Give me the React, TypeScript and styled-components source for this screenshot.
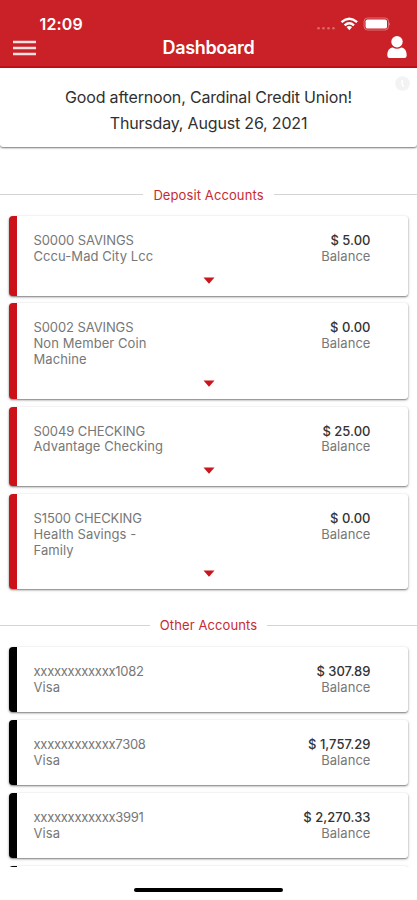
import React from "react";
import styled, { createGlobalStyle } from "styled-components";

const RED = "#ca2128";
const ACCENT = "#cb1219";

const GlobalStyle = createGlobalStyle`
  * { box-sizing: border-box; }
  body { margin: 0; background: #fff; font-family: Inter, "Liberation Sans", sans-serif; }
`;

const Screen = styled.div`
  height: 900px;
  display: flex;
  flex-direction: column;
  overflow: hidden;
  background: #fff;
`;

const Header = styled.header`
  height: 68px;
  flex: none;
  background: ${RED};
  border-bottom: 2px solid #be1016;
  color: #fff;
`;

const StatusBar = styled.div`
  height: 34px;
  padding: 14px 27px 0 39.5px;
  display: flex;
  justify-content: space-between;
`;

const Clock = styled.span`
  font-size: 16px;
  line-height: 20px;
  font-weight: 600;
  letter-spacing: 0.15px;
`;

const StatusIcons = styled.div`
  display: flex;
  height: 20px;
  align-items: center;
`;

const NavBar = styled.div`
  height: 32px;
  padding: 0 10px 0 13px;
  display: grid;
  grid-template-columns: 24px 1fr 20px;
  align-items: start;
`;

const MenuIcon = styled.svg`
  margin-top: 6px;
`;

const Title = styled.h1`
  margin: 2px 0 0;
  padding-right: 7px;
  text-align: center;
  font-size: 18px;
  line-height: 24px;
  font-weight: 600;
  letter-spacing: -0.35px;
`;

const UserIcon = styled.svg`
  margin-top: 1px;
`;

const Greeting = styled.section`
  position: relative;
  height: 79px;
  flex: none;
  padding-top: 16px;
  text-align: center;
  font-size: 16px;
  line-height: 26px;
  color: #303030;
  background: #fff;
  border-radius: 0 0 3px 3px;
  box-shadow: 0 1px 2px rgba(0, 0, 0, 0.55);
`;

const GreetingLine = styled.div`
  letter-spacing: -0.18px;
`;

const InfoDot = styled.svg`
  position: absolute;
  right: 7px;
  top: 8px;
`;

const AccountList = styled.main`
  padding: 37px 9px 0;
  height: 720px;
  flex: none;
  overflow: hidden;
`;

const SectionHeading = styled.h2<{ $top: number }>`
  margin: ${(p) => p.$top}px -9px 11px;
  height: 21px;
  display: flex;
  align-items: center;
  gap: 10px;
  color: #c82a31;
  font-size: 13px;
  font-weight: 400;
  letter-spacing: 0.1px;
  white-space: nowrap;

  &::before,
  &::after {
    content: "";
    flex: 1;
    height: 1px;
    background: #d4d4d4;
  }
`;

const Cards = styled.div<{ $gap: number }>`
  display: flex;
  flex-direction: column;
  gap: ${(p) => p.$gap}px;
`;

const Card = styled.article<{ $color: string; $height: number }>`
  height: ${(p) => p.$height}px;
  flex: none;
  display: flex;
  flex-direction: column;
  justify-content: space-between;
  padding: 17px 37.5px 12px 16.5px;
  border-left: 8px solid ${(p) => p.$color};
  border-radius: 4px 3px 3px 4px;
  background: #fff;
  box-shadow: 0 1px 2px rgba(0, 0, 0, 0.5), 0 1px 5px rgba(0, 0, 0, 0.07);
  font-size: 13px;
  line-height: 15.8px;
  color: #777;
`;

const CardRow = styled.div`
  display: flex;
  justify-content: space-between;
`;

const Name = styled.div<{ $spacing: number }>`
  letter-spacing: ${(p) => p.$spacing}px;
  white-space: nowrap;
`;

const Money = styled.div`
  text-align: right;
`;

const Amount = styled.div`
  color: #333;
  letter-spacing: 0.02px;
  font-weight: 500;
`;

const Caret = styled.svg`
  align-self: center;
  margin-left: 13px;
`;

const Footer = styled.footer`
  flex: 1;
  display: flex;
  justify-content: center;
  padding-top: 21px;
  background: #fff;
`;

const HomeIndicator = styled.div`
  width: 149px;
  height: 4px;
  border-radius: 2px;
  background: #000;
`;

type Account = { code: string; lines: string[]; amount: string };

const deposits: Account[] = [
  { code: "S0000 SAVINGS", lines: ["Cccu-Mad City Lcc"], amount: "5.00" },
  { code: "S0002 SAVINGS", lines: ["Non Member Coin", "Machine"], amount: "0.00" },
  { code: "S0049 CHECKING", lines: ["Advantage Checking"], amount: "25.00" },
  { code: "S1500 CHECKING", lines: ["Health Savings -", "Family"], amount: "0.00" },
];

const others: Account[] = [
  { code: "xxxxxxxxxxxx1082", lines: ["Visa"], amount: "307.89" },
  { code: "xxxxxxxxxxxx7308", lines: ["Visa"], amount: "1,757.29" },
  { code: "xxxxxxxxxxxx3991", lines: ["Visa"], amount: "2,270.33" },
  { code: "", lines: [], amount: "" },
];

function AccountCard({ account, deposit }: { account: Account; deposit?: boolean }) {
  const height = deposit ? 48 + 15.8 * (account.lines.length + 1) : 65;
  return (
    <Card $color={deposit ? ACCENT : "#000"} $height={height}>
      {account.code && (
        <CardRow>
          <div>
            <Name $spacing={deposit ? -0.1 : -0.28}>{account.code}</Name>
            {account.lines.map((line) => (
              <Name key={line} $spacing={0.07}>{line}</Name>
            ))}
          </div>
          <Money>
            <Amount>$ {account.amount}</Amount>
            <Name $spacing={0.05}>Balance</Name>
          </Money>
        </CardRow>
      )}
      {deposit && (
        <Caret width="12" height="7" viewBox="0 0 12 7">
          <path d="M0.5 0.5H11.5L6 6.7Z" fill="#c9151c" />
        </Caret>
      )}
    </Card>
  );
}

export default function App() {
  return (
    <Screen>
      <GlobalStyle />
      <Header>
        <StatusBar>
          <Clock>12:09</Clock>
          <StatusIcons>
            <svg width="74" height="20" viewBox="0 0 74 20">
              <g fill="#fff" fillOpacity="0.32">
                <circle cx="2.5" cy="14.2" r="1.3" />
                <circle cx="7.5" cy="14.2" r="1.3" />
                <circle cx="12.5" cy="14.2" r="1.3" />
                <circle cx="17.5" cy="14.2" r="1.3" />
              </g>
              <g fill="none" stroke="#fff" strokeWidth="2.4">
                <path d="M25.5 8.2Q33.3 1.5 41.1 8.2" />
                <path d="M28.6 11.4Q33.3 7.3 38 11.4" />
              </g>
              <path d="M30.5 13.1Q33.3 10.8 36.1 13.1L33.3 16.3Z" fill="#fff" />
              <rect x="48.1" y="4" width="24.4" height="12" rx="3.4" fill="none" stroke="#fff" strokeOpacity="0.35" />
              <rect x="49.6" y="5.4" width="21.4" height="9.2" rx="1.9" fill="#fff" />
              <path d="M73 8.2Q74.5 10 73 11.8Z" fill="#fff" fillOpacity="0.5" />
            </svg>
          </StatusIcons>
        </StatusBar>
        <NavBar>
          <MenuIcon width="23" height="16" viewBox="0 0 23 16">
            <path d="M0 2H23M0 8H23M0 14H23" stroke="#fff" strokeOpacity="0.86" strokeWidth="2.3" />
          </MenuIcon>
          <Title>Dashboard</Title>
          <UserIcon width="20" height="24" viewBox="0 0 20 24">
            <circle cx="10" cy="6.7" r="5.7" fill="#fff" />
            <path d="M0.3 20.5C0.3 15.5 2.3 13 5.7 12.5Q10 15 14.3 12.5C17.7 13 19.7 15.5 19.7 20.5Q19.7 23 17.3 23H2.7Q0.3 23 0.3 20.5Z" fill="#fff" />
          </UserIcon>
        </NavBar>
      </Header>
      <Greeting>
        <GreetingLine>Good afternoon, Cardinal Credit Union!</GreetingLine>
        <GreetingLine>Thursday, August 26, 2021</GreetingLine>
        <InfoDot width="15" height="15" viewBox="0 0 15 15">
          <circle cx="7.5" cy="7.5" r="7.3" fill="#f3f3f5" />
          <path d="M7.2 4V8.5L8.6 11" stroke="#fff" strokeWidth="1.5" fill="none" />
        </InfoDot>
      </Greeting>
      <AccountList>
        <SectionHeading $top={0}>Deposit Accounts</SectionHeading>
        <Cards $gap={7.8}>
          {deposits.map((a) => <AccountCard key={a.code} account={a} deposit />)}
        </Cards>
        <SectionHeading $top={25.5}>Other Accounts</SectionHeading>
        <Cards $gap={8}>
          {others.map((a) => <AccountCard key={a.code} account={a} />)}
        </Cards>
      </AccountList>
      <Footer><HomeIndicator /></Footer>
    </Screen>
  );
}
